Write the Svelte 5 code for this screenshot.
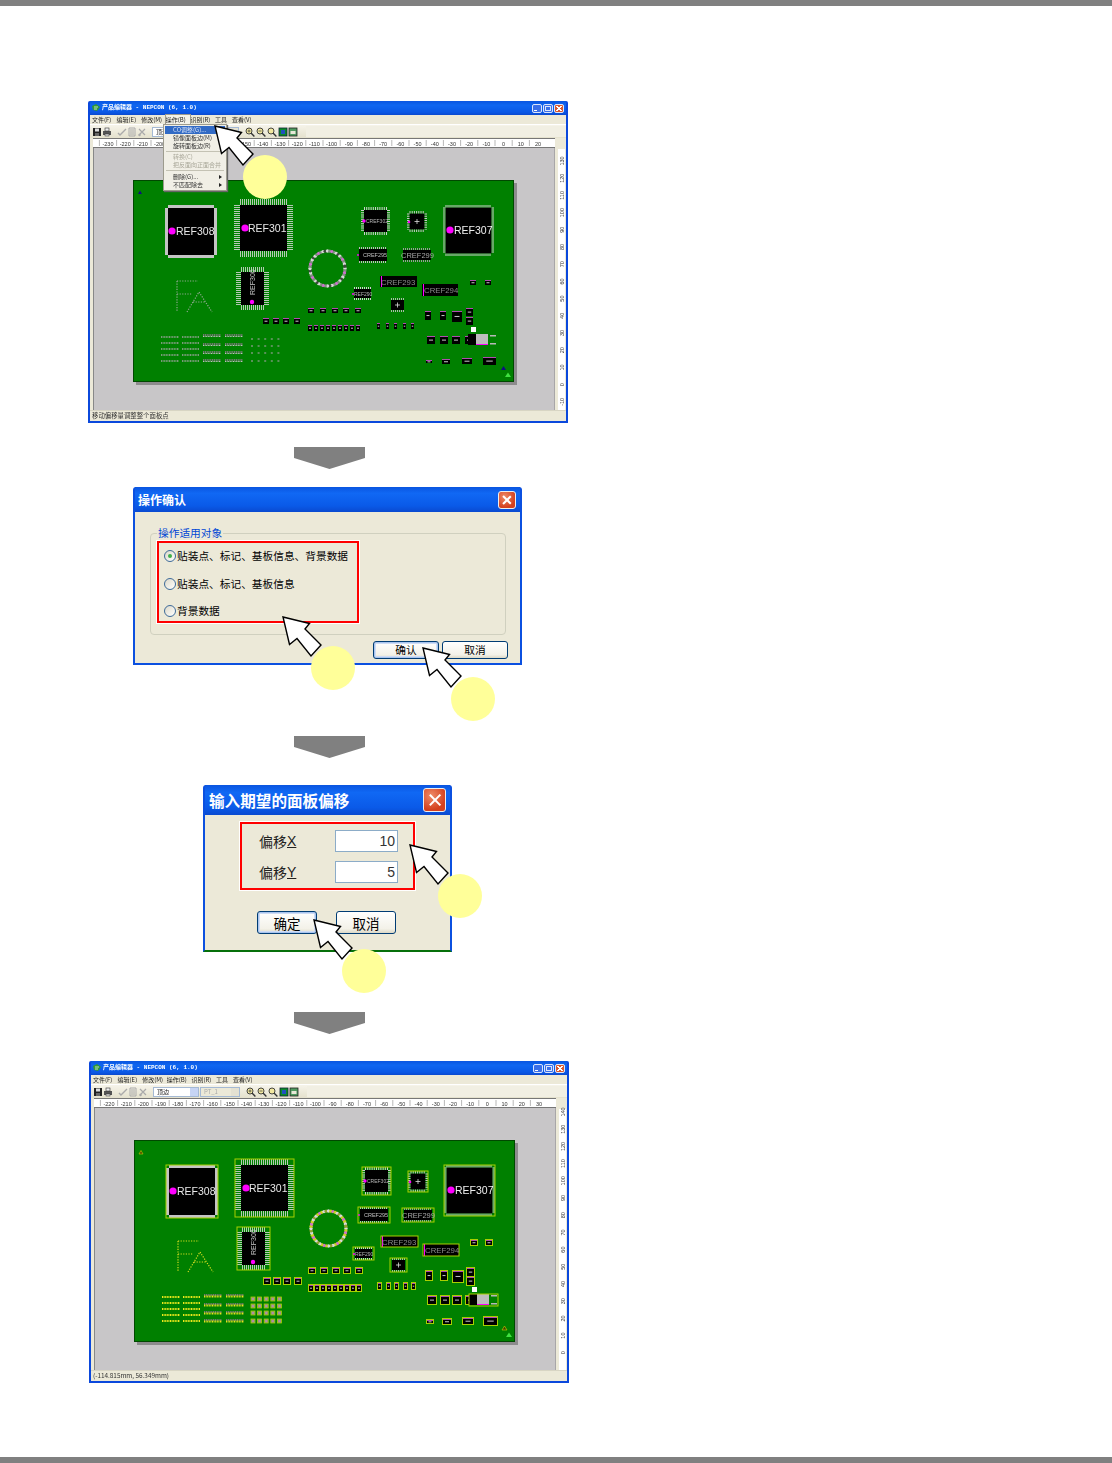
<script>
  // everything on the board is in board coordinates (381 x 202)
  const ics = [
    { x: 32, y: 25, w: 52, h: 53, inset: 3, band: '#c4c4c4', dash: 'none', dot: [39, 51, 3.6], label: 'REF308', lx: 43, ly: 55, size: 10.5, fill: '#e8e8e8' },
    { x: 101, y: 19, w: 59, h: 58, inset: 6, band: '#b5c9b5', dash: '1 1', dot: [112, 48, 3.6], label: 'REF301', lx: 115, ly: 52, size: 10.5, fill: '#e8e8e8' },
    { x: 103, y: 87, w: 33, h: 43, inset: 5, band: '#b5c9b5', dash: '1 1', dot: [119, 122, 2.2], label: 'REF300', lx: 122, ly: 115, size: 7, fill: '#c8c8c8', vertical: true },
    { x: 228, y: 27, w: 29, h: 28, inset: 3, band: '#d0d0d0', dash: '1 1.2', dot: [231, 41, 1.7], label: 'CREF302', lx: 233, ly: 43, size: 5, fill: '#b8b8b8' },
    { x: 274, y: 31, w: 20, h: 21, inset: 2.5, band: '#c8c8c8', dash: '1 1.2', dot: [276, 42, 1.3], cross: true },
    { x: 310, y: 25, w: 51, h: 51, inset: 2.5, band: '#d0d0d0', dash: '1 1', dot: [317, 50, 3.6], label: 'REF307', lx: 321, ly: 54, size: 10.5, fill: '#f0f0f0' },
    { x: 224, y: 67, w: 32, h: 16, inset: 2, band: '#bdbdbd', dash: '1 1', sides: 'tb', dot: [225, 75, 0.9], label: 'CREF295', lx: 230, ly: 77, size: 5.5, fill: '#c0c0c0' },
    { x: 268, y: 68, w: 32, h: 14, inset: 2, band: '#9a9a9a', dash: '1 1', sides: 'tb', label: 'CREF299', lx: 268, ly: 78, size: 7.5, fill: '#a8a8a8' },
    { x: 247, y: 96, w: 37, h: 11, inset: 0, band: '#888', dash: '1 1', sides: '', bar: true, label: 'CREF293', lx: 248, ly: 105, size: 7.8, fill: '#8c8c8c' },
    { x: 289, y: 104, w: 36, h: 12, inset: 0, band: '#888', dash: '1 1', sides: '', bar: true, label: 'CREF294', lx: 291, ly: 113, size: 7.8, fill: '#8c8c8c' },
    { x: 219, y: 107, w: 21, h: 13, inset: 2, band: '#d0d0d0', dash: '1 1', sides: 'tb', dot: [220, 114, 1], label: 'REF290', lx: 221, ly: 116, size: 5, fill: '#b8b8b8' },
    { x: 256, y: 118, w: 17, h: 14, inset: 2, band: '#aab9aa', dash: '1 1', sides: 'tb', cross: true }
  ];

  const smalls = [
    ...[130, 140, 150, 161].map((x) => ({ x, y: 138, w: 6, h: 6 })),
    ...[175, 187, 199, 210, 222].map((x) => ({ x, y: 128, w: 6, h: 5 })),
    ...Array.from({ length: 9 }, (_, i) => ({ x: 175 + i * 6, y: 145, w: 4, h: 6 })),
    ...[244, 253, 261, 270, 278].map((x) => ({ x, y: 143, w: 3, h: 6 })),
    { x: 337, y: 100, w: 6, h: 5 }, { x: 352, y: 100, w: 6, h: 5 },
    { x: 292, y: 131, w: 6, h: 9 }, { x: 307, y: 131, w: 6, h: 9 },
    { x: 319, y: 131, w: 10, h: 11 },
    { x: 333, y: 128, w: 7, h: 8 }, { x: 333, y: 137, w: 7, h: 8 },
    { x: 294, y: 156, w: 8, h: 8 }, { x: 307, y: 156, w: 8, h: 8 }, { x: 319, y: 156, w: 8, h: 8 }, { x: 332, y: 156, w: 8, h: 8 },
    { x: 293, y: 180, w: 6, h: 3 }, { x: 309, y: 179, w: 8, h: 5 }, { x: 329, y: 178, w: 10, h: 6 }, { x: 350, y: 177, w: 13, h: 8 }
  ];

  const gridParts = [159, 166, 173, 181].flatMap((y) =>
    [0, 1, 2, 3, 4].map((i) => ({ x: 117 + i * 6.6, y: y - 2, w: 4, h: 4 }))
  );
  const thinRows = [157, 163, 169, 175, 181].flatMap((y) => [{ x: 28, y, w: 18 }, { x: 49, y, w: 17 }]);
  const wideRows = [156, 165, 173, 181].flatMap((y) => [{ x: 70, y, w: 18 }, { x: 92, y, w: 18 }]);

  const tones = ['w', 'g', 'm', 'g', 'w', 'd'];
  const ringDots = Array.from({ length: 48 }, (_, i) => ({
    x: 194.5 + 17.5 * Math.cos((i * Math.PI) / 24),
    y: 88.5 + 17.5 * Math.sin((i * Math.PI) / 24),
    tone: tones[i % tones.length]
  }));

  const menus = ['文件(F)', '编辑(E)', '修改(M)', '操作(B)', '识别(R)', '工具', '查看(V)'];
  const zoomIcons = [1, 2, 3];

  const windows = {
    before: {
      ruler: -230,
      vStart: 130,
      vTop: 60,
      status: '移动偏移量调整整个面板点',
      selected: false
    },
    after: {
      ruler: -220,
      vStart: 140,
      vTop: 51,
      status: '(-114.815mm, 56.349mm)',
      selected: true
    }
  };
  const range = (n) => Array.from({ length: n }, (_, i) => i);
</script>

{#snippet callout(cls)}
  <svg class="callout {cls}" width="76" height="76" viewBox="-1 -1 76 76" aria-hidden="true">
    <path class="cursor" d="M0 0 L26.5 6.5 L22 12 L38 28 L28 39 L14 21.5 L6.5 27.5 Z" />
    <circle class="badge" cx="50" cy="51" r="22" />
  </svg>
{/snippet}

{#snippet stepArrow()}
  <svg class="step-arrow" width="71" height="22" viewBox="0 0 71 22" aria-hidden="true">
    <path d="M0 0 H71 V11 L35.5 22 L0 11 Z" />
  </svg>
{/snippet}

{#snippet board(selected)}
  <svg class="board" class:selected width="381" height="202" viewBox="0 0 381 202">
    <rect class="pcb" x="0.5" y="0.5" width="380" height="201" />

    <!-- fiducials -->
    <path class="fid" d="M5 14 L7 10.5 L9 14 Z" />
    <path class="fid" d="M368 190 L370.5 186 L373 190 Z" />
    <path class="fid-green" d="M372 197 L375 192.5 L378 197 Z" />

    <!-- FA silkscreen -->
    <g class="silk">
      <path d="M44 101 H65 M44 101 V132 M44 114 H59 M54 132 L66 112 L79 132 M60 122 H73" />
    </g>

    <!-- ring -->
    {#each ringDots as d}
      <circle class="ring {d.tone}" cx={d.x} cy={d.y} r="1.7" />
    {/each}

    <!-- ICs -->
    {#each ics as c}
      {#if c.sides !== ''}
        <rect x={c.x + c.inset} y={c.y + c.inset} width={c.w - 2 * c.inset} height={c.h - 2 * c.inset} fill="#000" />
        <line x1={c.x + c.inset} x2={c.x + c.w - c.inset} y1={c.y + c.inset / 2} y2={c.y + c.inset / 2} stroke={c.band} stroke-width={c.inset} stroke-dasharray={c.dash} />
        <line x1={c.x + c.inset} x2={c.x + c.w - c.inset} y1={c.y + c.h - c.inset / 2} y2={c.y + c.h - c.inset / 2} stroke={c.band} stroke-width={c.inset} stroke-dasharray={c.dash} />
        {#if c.sides !== 'tb'}
          <line y1={c.y + c.inset} y2={c.y + c.h - c.inset} x1={c.x + c.inset / 2} x2={c.x + c.inset / 2} stroke={c.band} stroke-width={c.inset} stroke-dasharray={c.dash} />
          <line y1={c.y + c.inset} y2={c.y + c.h - c.inset} x1={c.x + c.w - c.inset / 2} x2={c.x + c.w - c.inset / 2} stroke={c.band} stroke-width={c.inset} stroke-dasharray={c.dash} />
        {/if}
      {:else}
        <rect x={c.x} y={c.y} width={c.w} height={c.h} fill="#000" />
        <rect x={c.x + 1} y={c.y} width="1" height={c.h} fill="#ff00ff" />
      {/if}
      <rect class="frame" x={c.x} y={c.y} width={c.w} height={c.h} />
      {#if c.cross}
        <path class="cross" d="M{c.x + c.w / 2 - 2.5} {c.y + c.h / 2} h5 M{c.x + c.w / 2} {c.y + c.h / 2 - 2.5} v5" />
      {/if}
      {#if c.label}
        {#if c.vertical}
          <text class="ref" font-size={c.size} fill={c.fill} transform="translate({c.lx} {c.ly}) rotate(-90)">{c.label}</text>
        {:else}
          <text class="ref" font-size={c.size} fill={c.fill} x={c.lx} y={c.ly}>{c.label}</text>
        {/if}
      {/if}
      {#if c.dot}
        <circle cx={c.dot[0]} cy={c.dot[1]} r={c.dot[2]} fill="#ff00ff" />
      {/if}
    {/each}

    <!-- chip parts -->
    {#each smalls as s}
      <rect x={s.x} y={s.y} width={s.w} height={s.h} fill="#000" />
      <rect x={s.x} y={s.y} width={s.w} height="1" fill="#b04cb0" />
      <rect x={s.x + s.w * 0.25} y={s.y + s.h * 0.45} width={s.w * 0.5} height="1" fill="#c8c8c8" />
      <rect class="frame" x={s.x - 0.5} y={s.y - 0.5} width={s.w + 1} height={s.h + 1} />
    {/each}
    {#each gridParts as s}
      <rect class="grid-part" x={s.x} y={s.y} width={s.w} height={s.h} />
      <rect class="grid-mark" x={s.x + 1} y={s.y + 1.5} width={s.w - 2} height="1" />
    {/each}

    <!-- connector strips -->
    {#each thinRows as r}
      <line class="strip" x1={r.x} x2={r.x + r.w} y1={r.y} y2={r.y} />
    {/each}
    {#each wideRows as r}
      <line class="strip-top" x1={r.x} x2={r.x + r.w} y1={r.y - 1} y2={r.y - 1} />
      <line class="strip-low" x1={r.x} x2={r.x + r.w} y1={r.y + 0.5} y2={r.y + 0.5} />
    {/each}

    <!-- big diode at the right -->
    <rect x="335" y="154" width="8" height="11" fill="#000" />
    <rect x="343" y="154" width="12" height="11" fill="#bdbdbd" />
    <rect x="343" y="164" width="12" height="1" fill="#ff00ff" />
    <rect class="frame" x="335" y="154" width="29" height="12" />
    <rect x="338" y="147" width="5" height="5" fill="#fff" />
    <rect class="dash" x="357" y="155" width="6" height="1.5" />
    <rect class="dash" x="357" y="163" width="6" height="1.5" />
  </svg>
{/snippet}

{#snippet editor(win)}
  <div class="editor">
    <div class="title">
      <svg class="app-icon" width="8" height="8" viewBox="0 0 8 8"><path d="M0 2 L4 0 L8 3 L5 7 L1 6 Z" fill="#2f9a36" /><path d="M2 3 H6 M2 5 H5" stroke="#fff" stroke-width=".7" /></svg>
      <span class="title-text">产品编辑器 - NEPCON (6, 1.0)</span>
      <span class="caps">
        <span class="cap"><i class="mark-min"></i></span>
        <span class="cap"><i class="mark-max"></i></span>
        <span class="cap close"><i class="mark-x"></i></span>
      </span>
    </div>

    <div class="menubar">
      {#each menus as m}
        <span class="menu" class:open={!win.selected && m.startsWith('操作')}>{m}</span>
      {/each}
    </div>

    <div class="toolbar">
      <svg class="tool" viewBox="0 0 10 10"><path d="M1 1 H9 V9 H1 Z" fill="#222" /><rect x="3" y="1.5" width="4" height="3" fill="#ddd" /><rect x="3" y="6" width="4" height="3" fill="#666" /></svg>
      <svg class="tool" viewBox="0 0 10 10"><rect x="1" y="4" width="8" height="4" fill="#555" /><rect x="3" y="1" width="4" height="3" fill="#eee" stroke="#333" stroke-width=".6" /><rect x="3" y="7" width="4" height="2" fill="#ddd" stroke="#333" stroke-width=".5" /></svg>
      <span class="tool-gap"></span>
      <svg class="tool off" viewBox="0 0 10 10"><path d="M1 6 L3 8 L9 2" fill="none" stroke="#aaa" stroke-width="1.4" /></svg>
      <svg class="tool off" viewBox="0 0 10 10"><path d="M2 1 H8 V9 H2 Z M3 5 H7 M3 3 H7 M3 7 H7" fill="none" stroke="#aaa" /></svg>
      <svg class="tool off" viewBox="0 0 10 10"><path d="M2 2 L8 8 M8 2 L2 8" stroke="#aaa" stroke-width="1.2" /><circle cx="2.5" cy="8" r="1.2" fill="#aaa" /></svg>
      <span class="combo"><span>顶边</span><i class="drop"></i></span>
      <span class="combo disabled"><span>PT_1</span><i class="drop"></i></span>
      <span class="tool-gap wide"></span>
      {#each zoomIcons as z}
        <svg class="tool zoomer" viewBox="0 0 10 10"><circle cx="4" cy="4" r="3" fill="#f2e8a0" stroke="#333" stroke-width=".9" /><path d="M6 6 L9.4 9.4" stroke="#333" stroke-width="1.4" />{#if z === 1}<path d="M2.5 4 H5.5 M4 2.5 V5.5" stroke="#333" stroke-width=".7" />{:else if z === 2}<path d="M2.5 4 H5.5" stroke="#333" stroke-width=".7" />{/if}</svg>
      {/each}
      <svg class="tool" viewBox="0 0 10 10"><rect x="1" y="1" width="8" height="8" fill="#0a8a2a" stroke="#123" stroke-width=".8" /><rect x="3" y="3" width="4" height="4" fill="#2050c0" /></svg>
      <svg class="tool" viewBox="0 0 10 10"><rect x="1" y="1" width="8" height="8" fill="#4f9a60" stroke="#222" stroke-width=".8" /><rect x="2.5" y="4" width="5" height="3" fill="#e8e8d8" /></svg>
      <span class="tool-rest"></span>
    </div>

    <div class="client">
      <div class="main">
        <svg class="hruler" width="462" height="8" viewBox="0 0 462 8">
          <rect width="462" height="8" fill="#fff" />
          {#each range(26) as i}
            <path class="tick" d="M{15 + i * 17.2 - 8.6} 1 v6" />
            <text class="rtext" x={15 + i * 17.2} y="6.5" text-anchor="middle">{win.ruler + i * 10}</text>
          {/each}
        </svg>
        <div class="canvas">
          {@render board(win.selected)}
        </div>
      </div>
      <svg class="vruler" width="7" height="261" viewBox="0 0 7 261">
        <rect width="7" height="261" fill="#fff" />
        {#each range(15) as i}
          <text class="rtext" text-anchor="middle" transform="translate(5.5 {win.vTop - 48 + i * 17.2}) rotate(-90)">{win.vStart - i * 10}</text>
        {/each}
      </svg>
    </div>

    <div class="status">{win.status}</div>
  </div>
{/snippet}

<div class="page">
  <div class="rule"></div>

  <main class="steps">
    <section class="step">
      {@render editor(windows.before)}
      <ul class="dropdown">
        <li class="hot">CO调整(G)...</li>
        <li>镜像面板边(M)</li>
        <li>旋转面板边(R)</li>
        <li class="sep"></li>
        <li class="dis">转换(C)</li>
        <li class="dis">把反面向正面合并</li>
        <li class="sep"></li>
        <li class="more">删除(G)...</li>
        <li class="more">不匹配除去</li>
      </ul>
      {@render callout('c-menu')}
    </section>

    {@render stepArrow()}

    <section class="step dialog d-target">
      <header class="dlg-title">
        <span>操作确认</span>
        <span class="dlg-close"></span>
      </header>
      <div class="dlg-body">
        <fieldset>
          <legend>操作适用对象</legend>
          <div class="redbox radios">
            <label><span class="radio on"></span>贴装点、标记、基板信息、背景数据</label>
            <label><span class="radio"></span>贴装点、标记、基板信息</label>
            <label><span class="radio"></span>背景数据</label>
          </div>
        </fieldset>
        <div class="buttons">
          <button class="xp default">确认</button>
          <button class="xp">取消</button>
        </div>
      </div>
      {@render callout('c-radios')}
      {@render callout('c-confirm')}
    </section>

    {@render stepArrow()}

    <section class="step dialog d-offset">
      <header class="dlg-title">
        <span>输入期望的面板偏移</span>
        <span class="dlg-close"></span>
      </header>
      <div class="dlg-body">
        <div class="redbox offsets">
          <label>偏移<u>X</u><input value="10" /></label>
          <label>偏移<u>Y</u><input value="5" /></label>
        </div>
        <div class="buttons">
          <button class="xp default">确定</button>
          <button class="xp">取消</button>
        </div>
      </div>
      {@render callout('c-inputs')}
      {@render callout('c-ok')}
    </section>

    {@render stepArrow()}

    <section class="step last">
      {@render editor(windows.after)}
    </section>
  </main>

  <div class="rule"></div>
</div>

<style>
  :global(body) { margin: 0; background: #fff; }
  .page {
    height: 1463px; display: flex; flex-direction: column;
    font-family: "Noto Sans CJK SC", "Liberation Sans", sans-serif; color: #000;
  }
  .rule { height: 6px; background: #808080; flex: none; }
  .steps {
    flex: 1; width: 482px; margin-left: 87px; padding-top: 95px;
    display: flex; flex-direction: column; align-items: center;
  }
  .step { position: relative; flex: none; }
  .step.last { margin-left: 2px; }
  .step-arrow { flex: none; display: block; margin: 24px 0 18px 3px; }
  .step-arrow path { fill: #808080; }
  .d-target + .step-arrow { margin: 71px 0 27px 3px; }
  .d-offset + .step-arrow { margin: 60px 0 27px 3px; }

  /* editor window */
  .editor {
    width: 480px; height: 322px; box-sizing: border-box;
    border: 2px solid #0b48dc; border-top: 0; background: #ece9d8;
    display: flex; flex-direction: column; filter: blur(0.35px); overflow: hidden;
    border-radius: 2px 2px 0 0;
  }
  .title {
    height: 14px; flex: none; display: flex; align-items: center; padding: 0 2px 0 2px; gap: 2px;
    background: linear-gradient(#0a55e0, #0f66f0 30%, #0a58e6 80%, #0a49cf);
    color: #fff; font: bold 6px/1 "Liberation Mono", "Noto Sans CJK SC", monospace;
  }
  .title-text { flex: 1; white-space: pre; }
  .caps { display: flex; gap: 1px; }
  .cap {
    width: 10px; height: 9px; box-sizing: border-box; border: 1px solid #dce6fb; border-radius: 2px;
    background: #3a6fe8; position: relative;
  }
  .cap.close { background: #d8582f; }
  .cap i { position: absolute; display: block; }
  .mark-min { left: 1px; bottom: 1px; width: 3px; height: 1px; background: #fff; }
  .mark-max { left: 1px; top: 1px; width: 6px; height: 5px; box-sizing: border-box; border: 1px solid #dce6fb; border-top-width: 1.5px; }
  .mark-x { left: 1px; top: 1px; width: 6px; height: 5px; background: linear-gradient(40deg, transparent 42%, #fff 42%, #fff 58%, transparent 58%), linear-gradient(-40deg, transparent 42%, #fff 42%, #fff 58%, transparent 58%); }
  .menubar {
    height: 9px; flex: none; display: flex; padding-left: 2px; align-items: center;
    font-size: 6px; line-height: 9px; white-space: nowrap; color: #222;
  }
  .menu { width: 24.6px; flex: none; }
  .menu:nth-child(6) { width: 17px; }
  .menu.open { background: #f4f2e8; box-shadow: 0 0 0 1px #9d9b8e; }
  .toolbar {
    height: 13px; flex: none; display: flex; align-items: center; padding-left: 2px;
    background: linear-gradient(#f6f4ea, #e4e1cd); border-top: 1px solid #fff;
  }
  .tool { width: 10px; height: 10px; flex: none; }
  .zoomer { margin-right: 1px; }
  .tool-gap { width: 5px; flex: none; }
  .tool-gap.wide { width: 6px; }
  .tool-rest { margin-left: 8px; flex: 1; height: 11px; background: #f1efe3; }
  .combo {
    width: 46px; height: 10px; box-sizing: border-box; margin-left: 5px; flex: none;
    display: flex; justify-content: space-between; background: #fff; border: 1px solid #a4b9d4;
    font-size: 6px; line-height: 8px; padding-left: 3px; color: #222;
  }
  .combo.disabled { width: 40px; margin-left: 1px; background: #ece9d8; color: #aaa; }
  .drop { width: 8px; background: #c6d4f4; }
  .combo.disabled .drop { background: #e4e1d2; }
  .client { flex: 1; display: flex; min-height: 0; background: #ece9d8; padding-left: 3px; }
  .main { width: 465px; flex: none; display: flex; flex-direction: column; }
  .hruler { display: block; flex: none; border-top: 1px solid #777; border-bottom: 1px solid #777; box-sizing: content-box; }
  .rtext { font: 5.5px "Liberation Sans", sans-serif; fill: #333; }
  .tick { stroke: #888; stroke-width: 0.6; }
  .canvas {
    flex: 1; width: 462px; box-sizing: border-box; background: #c8c6c8; padding: 32px 0 0 39px;
    border-left: 1px solid #888; border-right: 1px solid #a8a6a8;
  }
  .vruler { display: block; flex: none; margin-top: 11px; overflow: visible; }
  .status {
    height: 10px; flex: none; border-top: 1px solid #d8d5c4; font-size: 6.4px; line-height: 10px;
    padding-left: 2px; color: #333; white-space: nowrap;
    font-family: "Noto Sans CJK SC", "Liberation Mono", monospace;
  }

  /* board */
  .board { display: block; box-shadow: 3px 3px 0 #8d8b8d; }
  .pcb { fill: #008000; stroke: #004800; stroke-width: 1; }
  .fid { fill: #101080; }
  .selected .fid { fill: #404000; stroke: #cc0; stroke-width: 0.6; }
  .fid-green { fill: #40e040; }
  .silk path { fill: none; stroke: #8fa88f; stroke-width: 1.2; stroke-dasharray: 1.2 1.4; }
  .selected .silk path { stroke: #d4dc20; }
  .ring.w { fill: #d8d8d8; }
  .ring.g { fill: #7f8f7f; }
  .ring.m { fill: #d070d0; }
  .ring.d { fill: #3a4a3a; }
  .selected .ring.g { fill: #c8d020; }
  .selected .ring.d { fill: #8f9f2f; }
  .frame { fill: none; stroke: none; }
  .selected .frame { stroke: #a8d000; stroke-width: 1; }
  .cross { stroke: #ddd; stroke-width: 0.8; fill: none; }
  .ref { font-family: "Liberation Sans", sans-serif; }
  .strip { stroke: #a0a4a0; stroke-width: 1.4; stroke-dasharray: 1 0.6; }
  .selected .strip { stroke: #ece81c; stroke-width: 2; }
  .strip-top { stroke: #e070e0; stroke-width: 1.2; stroke-dasharray: 1.2 0.6; }
  .strip-low { stroke: #c0c0c0; stroke-width: 1.2; stroke-dasharray: 1 0.6; }
  .selected .strip-low { stroke: #e8e020; stroke-width: 2; }
  .grid-part { fill: none; }
  .grid-mark { fill: #b4a4b4; }
  .selected .grid-part { fill: #8f8f7f; stroke: #a8d000; stroke-width: 0.8; }
  .selected .grid-mark { fill: #d090d0; }
  .dash { fill: #b8b8b8; }

  /* open menu in the first window */
  .dropdown {
    position: absolute; left: 75px; top: 23px; width: 64px; height: 67px; box-sizing: border-box;
    margin: 0; padding: 1px; list-style: none; background: #f1efe6; border: 1px solid #9d9b8e;
    box-shadow: 1px 1px 1px #666; font-size: 6px; line-height: 8px; color: #333;
    filter: blur(0.35px); white-space: nowrap;
  }
  .dropdown li { height: 7.8px; padding-left: 8px; position: relative; }
  .dropdown .hot { background: #316ac5; color: #dfe7f8; }
  .dropdown .dis { color: #a8a698; }
  .dropdown .sep { height: 1px; margin: 1.5px 1px; padding: 0; background: #c4c2b4; }
  .more::after {
    content: ""; position: absolute; right: 3px; top: 2px;
    border-left: 3px solid #222; border-top: 2px solid transparent; border-bottom: 2px solid transparent;
  }

  /* dialogs */
  .dialog {
    box-sizing: border-box; background: #ece9d8; display: flex; flex-direction: column;
    border: 2px solid #0b50e0; border-top: 0; border-radius: 3px 3px 0 0; margin-right: 1px;
  }
  .dlg-title {
    flex: none; display: flex; align-items: center; justify-content: space-between; color: #fff; font-weight: 700;
    background: linear-gradient(#0a55e0, #1068f4 25%, #0a5ae8 75%, #0a4ad0);
  }
  .dlg-close {
    position: relative; box-sizing: border-box; border: 1px solid #eee; border-radius: 3px;
    background: radial-gradient(circle at 35% 30%, #ee8a68, #d4411e 70%);
  }
  .dlg-close::before, .dlg-close::after {
    content: ""; position: absolute; left: 50%; top: 50%; width: 70%; height: 2px; background: #fff;
    transform: translate(-50%, -50%) rotate(45deg);
  }
  .dlg-close::after { transform: translate(-50%, -50%) rotate(-45deg); }
  .redbox {
    box-sizing: border-box; border: 2px solid #f00; box-shadow: 0 0 0 1px #fff;
  }
  .xp {
    box-sizing: border-box; padding: 0; border: 1px solid #003c74; border-radius: 3px;
    background: linear-gradient(#fff, #f3f1e8 80%, #dcd8c6);
    font-family: inherit; color: #000;
  }
  .xp.default { box-shadow: inset 0 0 0 1px #a8c4ee, inset 0 0 0 2px #cfdcf4; }

  .d-target { width: 389px; height: 178px; }
  .d-target .dlg-title { height: 25px; padding: 0 3px 0 3px; font-size: 12px; }
  .d-target .dlg-close { width: 18px; height: 18px; margin-right: 1px; }
  .d-target .dlg-body { flex: 1; padding: 15px 12px 0 15px; }
  fieldset {
    margin: 0 2px 0 0; padding: 0 6px 9px; border: 1px solid #d0d0bf; border-radius: 4px; box-sizing: border-box;
    height: 108px; min-width: 0;
  }
  legend { padding: 0 1px; margin: 0; font-size: 10.7px; line-height: 12px; color: #0046d5; }
  .radios {
    width: 202px; height: 82px; margin-top: 2px; display: flex; flex-direction: column;
    gap: 13.5px; padding: 6px 0 0 5px; font-size: 10.7px; line-height: 14px; white-space: nowrap;
  }
  .radios label { display: flex; align-items: center; gap: 1px; height: 14px; }
  .radio {
    width: 12px; height: 12px; box-sizing: border-box; border-radius: 50%; flex: none; position: relative;
    border: 1px solid #3d6a99; background: linear-gradient(135deg, #dcd8c8, #fff);
  }
  .radio.on::after {
    content: ""; position: absolute; left: 3px; top: 3px; width: 4px; height: 4px; border-radius: 50%; background: #3fb04a;
  }
  .d-target .buttons { display: flex; justify-content: flex-end; gap: 3px; margin-top: 6px; }
  .d-target .xp { width: 66px; height: 18px; font-size: 10.7px; line-height: 14px; }

  .d-offset { width: 249px; height: 167px; border-bottom-color: #06700a; }
  .d-offset .dlg-title { height: 30px; padding: 0 4px; font-size: 15.6px; }
  .d-offset .dlg-close { width: 23px; height: 24px; }
  .d-offset .dlg-body { flex: 1; padding: 7px 0 0 35px; }
  .offsets {
    width: 175px; height: 68px; padding: 6px 15px 0 17px; display: flex; flex-direction: column; gap: 9px;
  }
  .offsets label {
    display: flex; align-items: center; height: 22px; font-size: 14px; line-height: 20px; color: #222;
  }
  .offsets u { font-family: "Liberation Sans", sans-serif; }
  .offsets input {
    width: 63px; height: 22px; box-sizing: border-box; margin-left: auto; padding: 0 2px; text-align: right;
    border: 1px solid #8cacc8; background: #fff; font: 14px "Liberation Sans", sans-serif; color: #333;
  }
  .d-offset .buttons { display: flex; gap: 19px; margin: 21px 0 0 17px; }
  .d-offset .xp { width: 60px; height: 23px; font-size: 13.5px; line-height: 18px; }

  /* callouts over the screenshots */
  .callout { position: absolute; overflow: visible; }
  .cursor { fill: #fff; stroke: #000; stroke-width: 1.4; stroke-linejoin: miter; }
  .badge { fill: #ffff99; }
  .c-menu { left: 126px; top: 24px; }
  .c-radios { left: 147px; top: 129px; }
  .c-confirm { left: 287px; top: 160px; }
  .c-inputs { left: 204px; top: 59px; }
  .c-ok { left: 108px; top: 134px; }
</style>
